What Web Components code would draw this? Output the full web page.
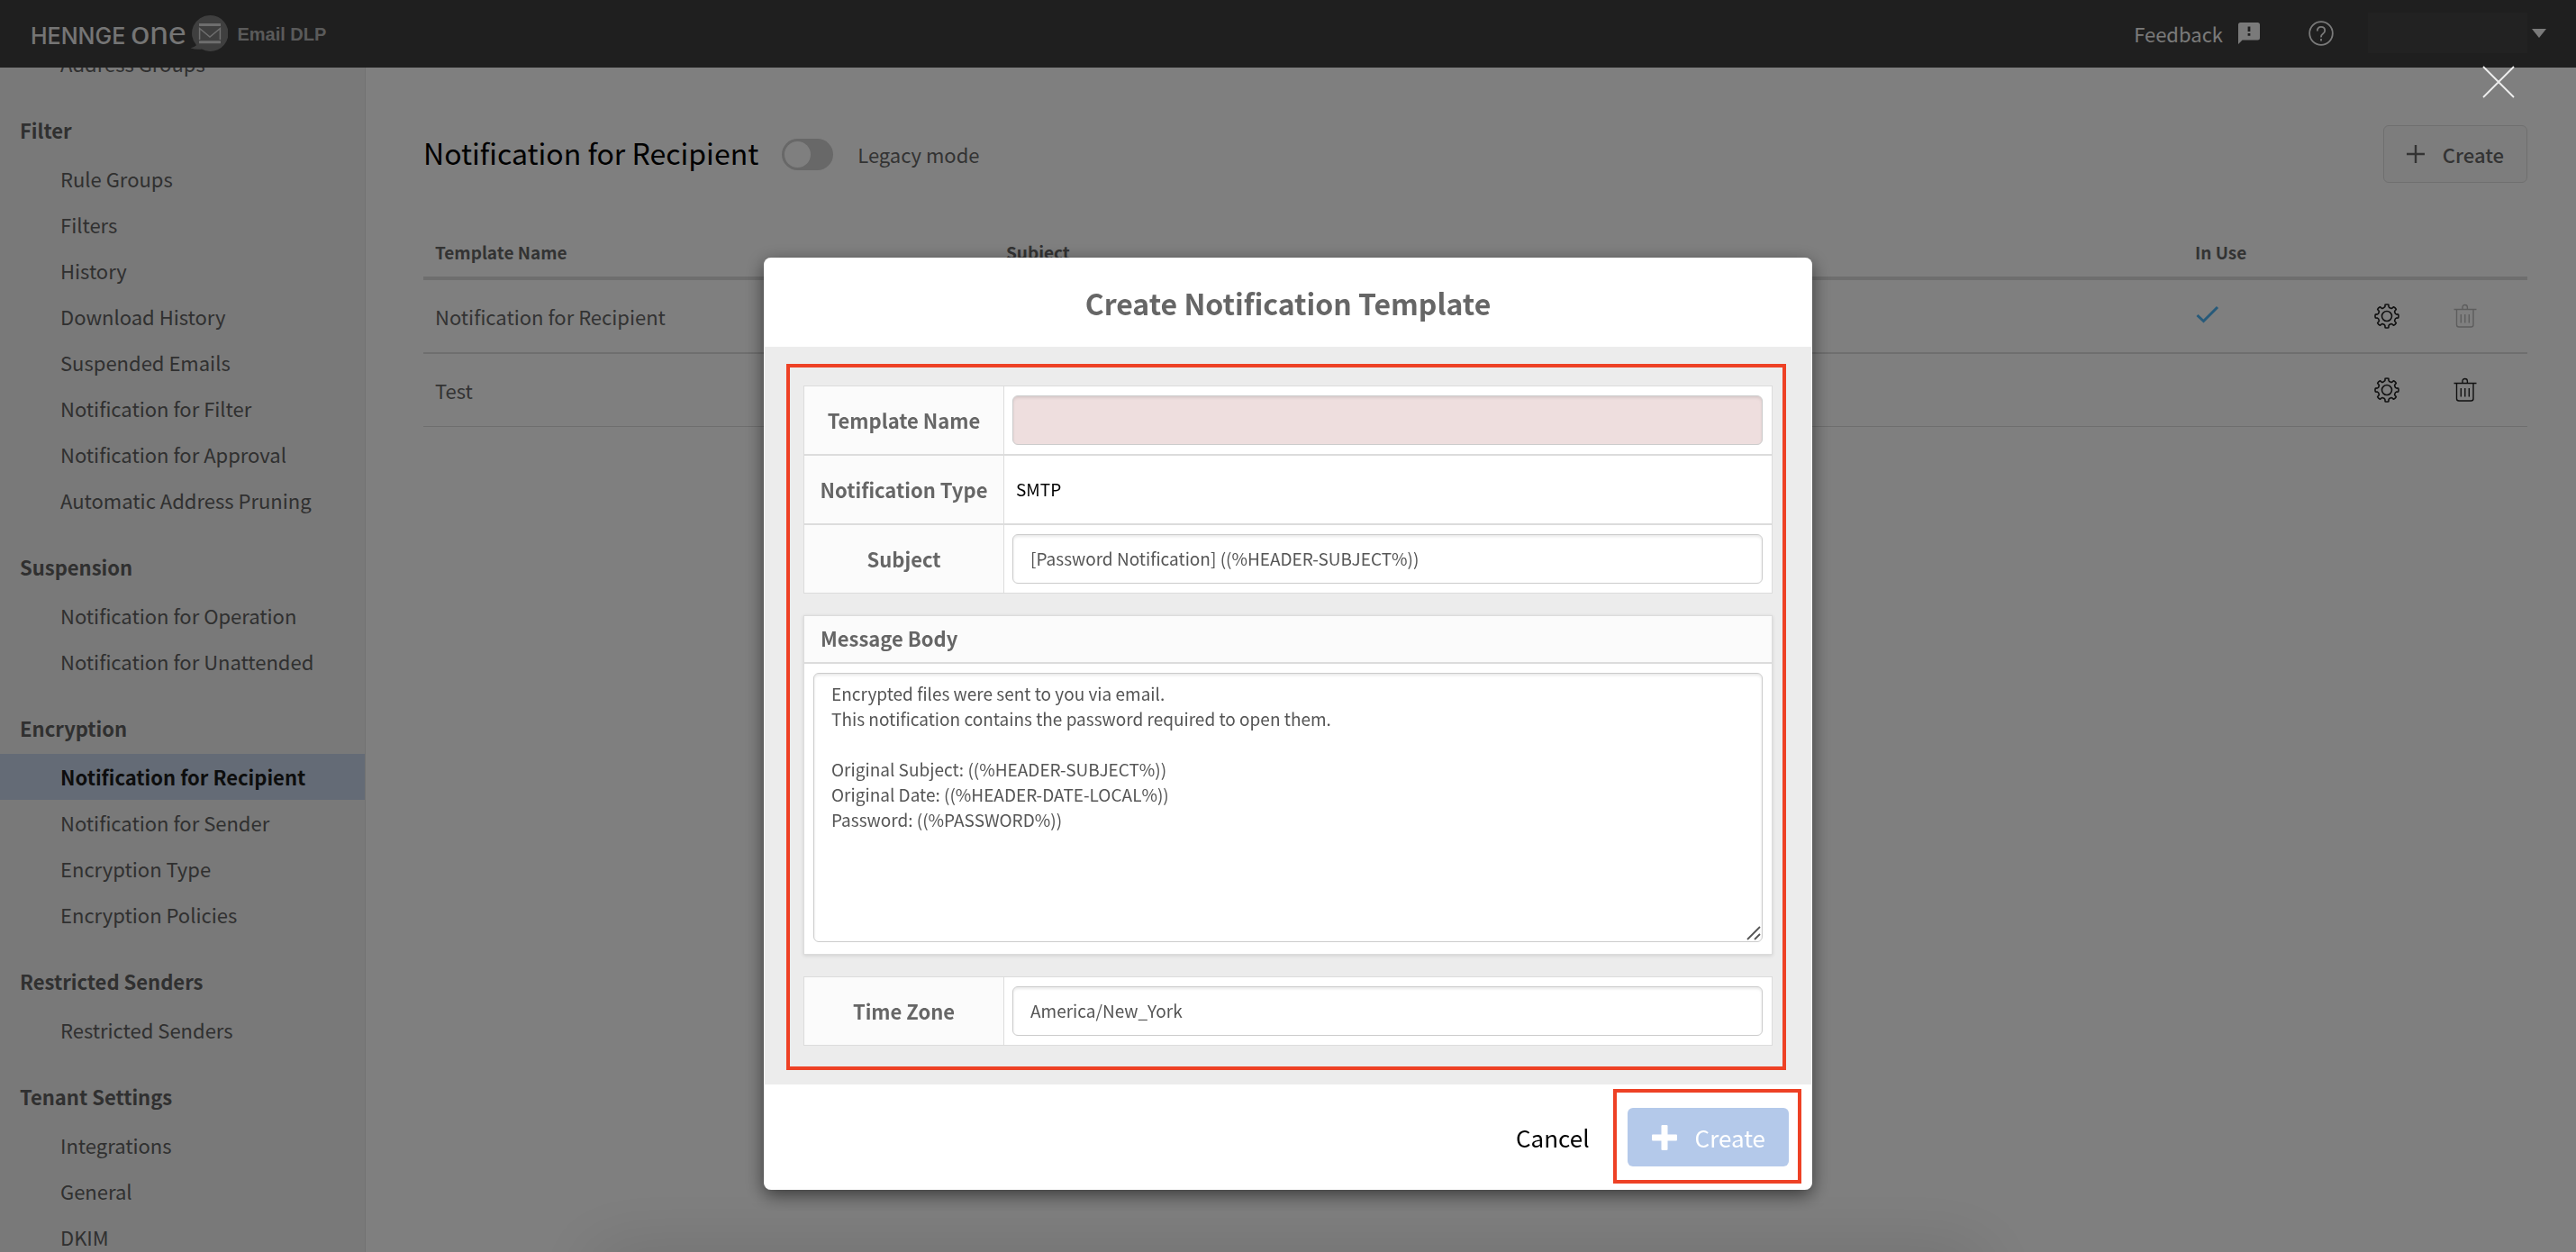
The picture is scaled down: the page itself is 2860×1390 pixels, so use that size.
<!DOCTYPE html>
<html lang="en">
<head>
<meta charset="utf-8">
<title>Email DLP</title>
<style>
  html, body { margin: 0; height: 100%; }
  body { font-family: "Noto Sans CJK JP", "Open Sans", sans-serif; color: #666; font-size: 22px; overflow: hidden; }
</style>
</head>
<body>
<dlp-app></dlp-app>
<script>
const define = (name, html, after) => {
  const tpl = document.createElement('template');
  tpl.innerHTML = html;
  customElements.define(name, class extends HTMLElement {
    constructor() {
      super();
      this.attachShadow({ mode: 'open' }).append(tpl.content.cloneNode(true));
    }
    connectedCallback() { if (after) after(this, this.shadowRoot); }
  });
};

const gearPath = (() => {
  const f = n => n.toFixed(2);
  const at = (r, a) => f(14 + r * Math.cos(a)) + ' ' + f(14 + r * Math.sin(a));
  let d = '';
  for (let i = 0; i < 8; i++) {
    const c = i * Math.PI / 4 - Math.PI / 2;
    d += (i ? 'Q' + at(9.4, c - 0.3) + ' ' : 'M') + at(10.6, c - 0.2);
    d += 'L' + at(12.8, c - 0.15) + 'Q' + at(13.4, c) + ' ' + at(12.8, c + 0.15);
    d += 'L' + at(10.6, c + 0.2) + 'Q' + at(9.4, c + 0.3) + ' ' + at(9.9, c + Math.PI / 8);
  }
  return d + 'Z';
})();

const icons = {
  plus: [20, 20, '<path d="M10 0V20M0 10H20" stroke="currentColor" stroke-width="2.4" fill="none"/>'],
  plusBold: [30, 30, '<path fill="currentColor" d="M12.500 1H17.500Q18.500 1 18.500 2V11.500H28Q29 11.500 29 12.500V17.500Q29 18.500 28 18.500H18.500V28Q18.500 29 17.500 29H12.500Q11.500 29 11.500 28V18.500H2Q1 18.500 1 17.500V12.500Q1 11.500 2 11.500H11.500V2Q11.500 1 12.500 1Z"/>'],
  gear: [28, 28, `<g fill="none" stroke="currentColor" stroke-width="1.6" stroke-linejoin="round"><path d="${gearPath}"/><circle cx="14" cy="14" r="5.5"/></g>`],
  trash: [26, 28, '<g fill="none" stroke="currentColor" stroke-width="1.4"><path d="M.5 6.5H25.500M10 6V4.200Q10 1.500 12.700 1.500T15.400 4.200V6M3.500 6.500V23.500Q3.500 26 6 26H19.500Q22 26 22 23.500V6.500M8.300 12V21.500M12.800 12V21.500M17.300 12V21.500"/></g>'],
  check: [26, 20, '<path d="M1.500 11L8.500 17.500L24 2" stroke="currentColor" stroke-width="3" fill="none"/>'],
  feedback: [24, 24, '<path fill="currentColor" fill-rule="evenodd" d="M2.500 0H21.500Q24 0 24 2.500V17Q24 19.500 21.500 19.500H4.500L0 24V2.500Q0 0 2.500 0ZM10.600 4.500V10H13.400V4.500ZM10.600 12V14.800H13.400V12Z"/>'],
  help: [28, 28, '<g fill="none" stroke="currentColor" stroke-width="1.800"><circle cx="14" cy="14" r="12.800"/><path d="M9.800 11.500Q9.800 6.900 14 6.900T18.200 10.900Q18.200 13 16 14.500T14 18.400"/><path d="M14 20V22.400"/></g>'],
  caret: [16, 10, '<path fill="currentColor" d="M0 0H16L8 10Z"/>'],
  close: [36, 36, '<path d="M1 1L35 35M35 1L1 35" stroke="currentColor" stroke-width="1.800" fill="none"/>'],
  mail: [42, 40, '<path fill="#828282" d="M22 0A20 20 0 1 1 13 37.600Q7 38.300 .5 36.500Q5 35 7 33.200A20 20 0 0 1 22 0Z"/><g fill="none" stroke="#fff" opacity=".8"><path stroke-width="3" d="M10 10.500H34M10 29.700H34"/><path stroke-width="1.500" d="M10.600 27V14.500L22 24L33.400 14.500V27"/></g>']
};
define('ui-icon', '<style>:host{display:inline-flex;flex:none}svg{display:block}</style><svg aria-hidden="true"></svg>', (el, root) => {
  const [w, h, body] = icons[el.getAttribute('name')];
  const svg = root.querySelector('svg');
  svg.setAttribute('width', w);
  svg.setAttribute('height', h);
  svg.setAttribute('viewBox', `0 0 ${w} ${h}`);
  svg.innerHTML = body;
});

define('app-header', `
<style>
  :host { display: flex; align-items: center; justify-content: space-between; height: 75px; flex: none;
    background: #3e3e3e; color: #fff; padding: 0 33px 2px 34px; box-sizing: border-box; }
  .brand, .tools { display: flex; align-items: center; }
  .brand { color: #fff; text-decoration: none; }
  .word { display: flex; align-items: baseline; gap: 6px; opacity: .95; padding-bottom: 4px; }
  .henn { font: 500 25px/30px Inter, sans-serif; }
  .one { font: 37px/44px Lato, sans-serif; }
  ui-icon[name=mail] { margin-left: 5px; }
  .product { font: bold 20px/30px "Liberation Sans", sans-serif; color: #bbb; margin: 2px 0 0 10px; }
  a, button { font: inherit; color: inherit; text-decoration: none; background: none; border: 0; padding: 0; opacity: .95; }
  .feedback { display: flex; align-items: center; gap: 17px; }
  .help { display: flex; margin-left: 54px; }
  .account { display: flex; align-items: center; gap: 5px; margin-left: 38px; }
  .account span { width: 177px; height: 45px; background: #464646; }
</style>
<a class="brand" href="#"><span class="word"><span class="henn">HENNGE</span><span class="one">one</span></span><ui-icon name="mail"></ui-icon><span class="product">Email DLP</span></a>
<div class="tools">
  <a class="feedback" href="#">Feedback<ui-icon name="feedback"></ui-icon></a>
  <a class="help" href="#" aria-label="Help"><ui-icon name="help"></ui-icon></a>
  <button class="account" aria-label="Account"><span></span><ui-icon name="caret"></ui-icon></button>
</div>`);

define('nav-section', `
<style>
  :host { display: block; margin-bottom: 23px; }
  h2 { margin: 0 0 3px; padding-left: 22px; font-size: 22px; line-height: 51px; font-weight: bold; color: #606060; }
  h2:empty { display: none; }
</style>
<h2></h2><slot></slot>`, (el, root) => { root.querySelector('h2').textContent = el.getAttribute('heading') || ''; });

define('nav-item', `
<style>
  :host { display: block; }
  a { display: block; padding-left: 67px; line-height: 51px; color: #606060; text-decoration: none; }
  :host([active]) a { background: #c8d7ec; color: #1a1a1a; font-weight: bold; }
</style>
<a href="#"><slot></slot></a>`);

define('app-sidebar', `
<style>
  :host { display: block; flex: none; width: 405px; background: #f2f2f2; border-right: 1px solid #e4e4e4; overflow: hidden; }
  nav { margin-top: -30px; }
</style>
<nav>
  <nav-section><nav-item>Address Groups</nav-item></nav-section>
  <nav-section heading="Filter">
    <nav-item>Rule Groups</nav-item><nav-item>Filters</nav-item><nav-item>History</nav-item>
    <nav-item>Download History</nav-item><nav-item>Suspended Emails</nav-item>
    <nav-item>Notification for Filter</nav-item><nav-item>Notification for Approval</nav-item>
    <nav-item>Automatic Address Pruning</nav-item>
  </nav-section>
  <nav-section heading="Suspension">
    <nav-item>Notification for Operation</nav-item><nav-item>Notification for Unattended</nav-item>
  </nav-section>
  <nav-section heading="Encryption">
    <nav-item active>Notification for Recipient</nav-item><nav-item>Notification for Sender</nav-item>
    <nav-item>Encryption Type</nav-item><nav-item>Encryption Policies</nav-item>
  </nav-section>
  <nav-section heading="Restricted Senders"><nav-item>Restricted Senders</nav-item></nav-section>
  <nav-section heading="Tenant Settings">
    <nav-item>Integrations</nav-item><nav-item>General</nav-item><nav-item>DKIM</nav-item>
  </nav-section>
</nav>`);

define('template-list', `
<style>
  :host { display: block; flex: 1; padding: 64px 54px 0 64px; background: #fff; }
  header { display: flex; align-items: center; height: 64px; }
  h1 { margin: 0; padding-bottom: 4px; font-size: 32px; line-height: 48px; font-weight: normal; color: #000; }
  label { display: flex; align-items: center; gap: 27px; margin-left: 26px; flex: 1; }
  input { appearance: none; margin: 0; width: 57px; height: 35px; box-sizing: border-box; border-radius: 18px; background: #d0d0d0; display: flex; align-items: center; padding: 0 3px; }
  input::before { content: ""; width: 29px; height: 29px; border-radius: 50%; background: #fff; }
  header button { display: flex; align-items: center; gap: 20px; height: 64px; padding: 0 25px; box-sizing: border-box;
    background: #fafafa; border: 1px solid #dedede; border-radius: 6px; font: 500 22px "Noto Sans CJK JP", sans-serif; color: #666; }
  table { width: 100%; border-collapse: separate; border-spacing: 0; margin-top: 48px; table-layout: fixed; }
  th, td { text-align: left; padding: 0 13px; box-sizing: border-box; }
  th { font-size: 19px; line-height: 30px; height: 60px; padding-top: 2px; border-bottom: 4px solid #dcdcdc; }
  td { height: 82px; border-bottom: 2px solid #dcdcdc; }
  tr:last-child td { border-bottom-width: 1px; height: 81px; }
  td.check { color: #4eb4f4; padding: 0 0 5px 14px; }
  .act { padding: 0; }
  .act div { display: flex; gap: 60px; align-items: center; }
  .act button { display: flex; background: none; border: 0; padding: 0; color: #222; }
  .act button:disabled { color: #bbb; }
</style>
<header>
  <h1>Notification for Recipient</h1>
  <label><input type="checkbox" role="switch">Legacy mode</label>
  <button><ui-icon name="plus"></ui-icon>Create</button>
</header>
<table>
  <colgroup><col style="width:634px"><col><col style="width:212px"><col style="width:170px"></colgroup>
  <thead><tr><th>Template Name</th><th>Subject</th><th>In Use</th><th></th></tr></thead>
  <tbody>
    <tr><td>Notification for Recipient</td><td></td><td class="check"><ui-icon name="check"></ui-icon></td>
      <td class="act"><div><button aria-label="Settings"><ui-icon name="gear"></ui-icon></button><button aria-label="Delete" disabled><ui-icon name="trash"></ui-icon></button></div></td></tr>
    <tr><td>Test</td><td></td><td></td>
      <td class="act"><div><button aria-label="Settings"><ui-icon name="gear"></ui-icon></button><button aria-label="Delete"><ui-icon name="trash"></ui-icon></button></div></td></tr>
  </tbody>
</table>`);

define('form-field', `
<style>
  :host { display: grid; grid-template-columns: 222px 1fr; min-height: 75px; background: #fff; border: 1px solid #dcdcdc; }
  :host(:not([last])) { border-bottom-width: 2px; }
  :host([joined]) { border-top: 0; }
  label { display: flex; align-items: center; justify-content: center; padding-bottom: 2px; background: #fbfbfb; border-right: 1px solid #dcdcdc; font-weight: bold; }
  .value { display: flex; align-items: center; padding: 0 10px 0 9px; }
  input, output { flex: 1; min-width: 0; font: 19px "Noto Sans CJK JP", sans-serif; padding: 0 19px 2px; }
  output { color: #000; padding-left: 4px; }
  input { height: 55px; box-sizing: border-box; border: 1px solid #ccc; border-radius: 6px;
    background: #fff; color: #555; box-shadow: inset 0 2px 3px rgba(0,0,0,.09); outline: 0; }
  :host([invalid]) input { background: #eedede; }
</style>
<label for="field"></label><div class="value"></div>`, (el, root) => {
  root.querySelector('label').textContent = el.getAttribute('label');
  const control = document.createElement(el.hasAttribute('readonly') ? 'output' : 'input');
  control.id = 'field';
  control.value = el.getAttribute('value') || '';
  root.querySelector('.value').replaceChildren(control);
});

define('message-body', `
<style>
  :host { display: block; margin: 24px 0; border: 1px solid #dcdcdc; background: #fff; box-shadow: 0 1px 4px rgba(0,0,0,.12); }
  label { display: block; padding: 0 18px 2px; line-height: 49px; font-weight: bold; background: #fbfbfb; border-bottom: 2px solid #dcdcdc; }
  .box { padding: 10px 10px 13px; display: flex; position: relative; }
  textarea { flex: 1; height: 299px; box-sizing: border-box; margin: 0; padding: 8px 19px; resize: none; outline: 0;
    border: 1px solid #ccc; border-radius: 6px; color: #555; font: 19px/28px "Noto Sans CJK JP", sans-serif; box-shadow: inset 0 2px 3px rgba(0,0,0,.09); }
  svg { position: absolute; right: 12px; bottom: 15px; }
</style>
<label for="body">Message Body</label>
<div class="box"><textarea id="body">Encrypted files were sent to you via email.
This notification contains the password required to open them.

Original Subject: ((%HEADER-SUBJECT%))
Original Date: ((%HEADER-DATE-LOCAL%))
Password: ((%PASSWORD%))</textarea>
<svg width="16" height="16" viewBox="0 0 16 16" aria-hidden="true"><path d="M1 15L15 1M9 15L15 9" stroke="#555" stroke-width="1.800"/></svg></div>`);

define('create-dialog', `
<style>
  :host { position: fixed; inset: 0; display: flex; justify-content: center; align-items: flex-start; padding-top: 286px; box-sizing: border-box; background: rgba(0,0,0,.5); }
  :host::after { content: ""; position: absolute; top: 100%; left: 23%; right: 23%; height: 60px; box-shadow: 0 0 80px rgba(0,0,0,.14); }
  section { width: 1164px; box-sizing: border-box; border: 1px solid #fff; border-width: 0 1px; border-radius: 8px; background: #fff; box-shadow: 0 6px 20px rgba(0,0,0,.55); }
  h2 { margin: 0; line-height: 97px; padding-top: 2px; font-size: 32px; text-align: center; }
  .body { background: #ececec; padding: 19px 28px 16px 24px; }
  .mark { border: 4px solid #ee4125; }
  .form { padding: 20px 11px 23px 15px; }
  footer { display: flex; justify-content: flex-end; align-items: center; gap: 26px; padding: 5px 11px 7px; }
  footer .mark { padding: 17px 10px 15px 12px; }
  button { font: 26px "Noto Sans CJK JP", sans-serif; border: 0; background: none; color: #000; padding: 0; }
  .cancel { padding-top: 2px; }
  .create { display: flex; align-items: center; gap: 19px; height: 65px; padding: 0 26px; border-radius: 6px; background: #b4c9ea; color: #fff; }
  .close { position: absolute; top: 73px; right: 68px; display: flex; color: #eee; }
</style>
<section role="dialog" aria-labelledby="title">
  <h2 id="title">Create Notification Template</h2>
  <div class="body"><div class="mark form">
    <form-field label="Template Name" invalid></form-field>
    <form-field label="Notification Type" value="SMTP" readonly joined></form-field>
    <form-field label="Subject" value="[Password Notification] ((%HEADER-SUBJECT%))" joined last></form-field>
    <message-body></message-body>
    <form-field label="Time Zone" value="America/New_York" last></form-field>
  </div></div>
  <footer><button class="cancel">Cancel</button><div class="mark"><button class="create"><ui-icon name="plusBold"></ui-icon>Create</button></div></footer>
</section>
<button class="close" aria-label="Close"><ui-icon name="close"></ui-icon></button>`);

define('dlp-app', `
<style>
  :host { display: flex; flex-direction: column; height: 100vh; }
  .page { flex: 1; display: flex; min-height: 0; }
</style>
<app-header></app-header>
<div class="page"><app-sidebar></app-sidebar><template-list></template-list></div>
<create-dialog></create-dialog>`);
</script>
</body>
</html>
